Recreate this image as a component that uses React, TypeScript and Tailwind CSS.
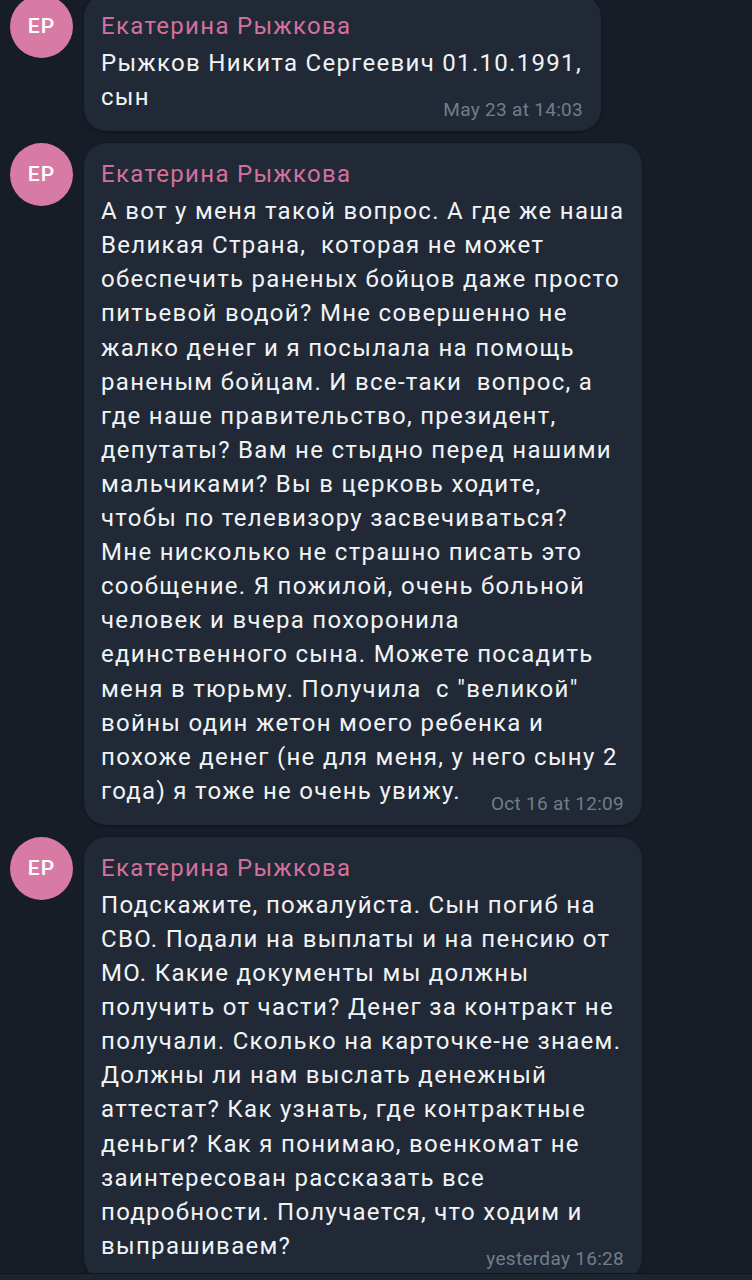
const messages = [
  {
    lines: ["Рыжков Никита Сергеевич 01.10.1991,", "сын"],
    time: "May 23 at 14:03",
    width: "w-[517px]",
  },
  {
    lines: [
      "А вот у меня такой вопрос. А где же наша",
      "Великая Страна,  которая не может",
      "обеспечить раненых бойцов даже просто",
      "питьевой водой? Мне совершенно не",
      "жалко денег и я посылала на помощь",
      "раненым бойцам. И все-таки  вопрос, а",
      "где наше правительство, президент,",
      "депутаты? Вам не стыдно перед нашими",
      "мальчиками? Вы в церковь ходите,",
      "чтобы по телевизору засвечиваться?",
      "Мне нисколько не страшно писать это",
      "сообщение. Я пожилой, очень больной",
      "человек и вчера похоронила",
      "единственного сына. Можете посадить",
      "меня в тюрьму. Получила  с \"великой\"",
      "войны один жетон моего ребенка и",
      "похоже денег (не для меня, у него сыну 2",
      "года) я тоже не очень увижу.",
    ],
    time: "Oct 16 at 12:09",
    width: "w-[558px]",
  },
  {
    lines: [
      "Подскажите, пожалуйста. Сын погиб на",
      "СВО. Подали на выплаты и на пенсию от",
      "МО. Какие документы мы должны",
      "получить от части? Денег за контракт не",
      "получали. Сколько на карточке-не знаем.",
      "Должны ли нам выслать денежный",
      "аттестат? Как узнать, где контрактные",
      "деньги? Как я понимаю, военкомат не",
      "заинтересован рассказать все",
      "подробности. Получается, что ходим и",
      "выпрашиваем?",
    ],
    time: "yesterday 16:28",
    width: "w-[558px]",
  },
];

const Message = ({ lines, time, width }: { lines: string[]; time: string; width: string }) => {
  const body = lines.slice(0, -1);
  const last = lines[lines.length - 1];
  return (
    <div className="flex items-start gap-[11px] pl-[10px]">
      <div className="w-[63px] h-[63px] shrink-0 rounded-full bg-[#d87ba4] flex items-center justify-center text-white text-[21px] tracking-[1px] font-medium">
        ЕР
      </div>
      <div
        className={`${width} rounded-[22px] bg-[#202935] pl-[17px] pr-[18px] pt-[14px] pb-[17px] shadow-[0_1px_3px_rgba(0,0,0,0.35)]`}
      >
        <div className="text-[#d3719d] text-[24px] tracking-[1.3px] leading-[34px] mb-[3px]">Екатерина Рыжкова</div>
        <div className="text-[#f1f3f5] text-[24px] tracking-[1.3px] leading-[34.1px] whitespace-pre">
          {body.map((l, i) => (
            <div key={i}>{l}</div>
          ))}
          <div className="flex justify-between items-end">
            <span>{last}</span>
            <span className="text-[#6f7e8c] text-[19px] tracking-[0.3px] leading-[20px] -mb-[6px]">{time}</span>
          </div>
        </div>
      </div>
    </div>
  );
};

export default function App() {
  return (
    <div className="h-[1280px] w-[752px] overflow-hidden bg-[#171d26] flex flex-col font-['Roboto',sans-serif]">
      <div className="flex-1 overflow-hidden flex flex-col gap-[12px] -mt-[5px]">
        {messages.map((m, i) => (
          <Message key={i} {...m} />
        ))}
      </div>
      <div className="h-[7px] shrink-0 border-t border-[#10151c] bg-[#1c242e]" />
    </div>
  );
}
